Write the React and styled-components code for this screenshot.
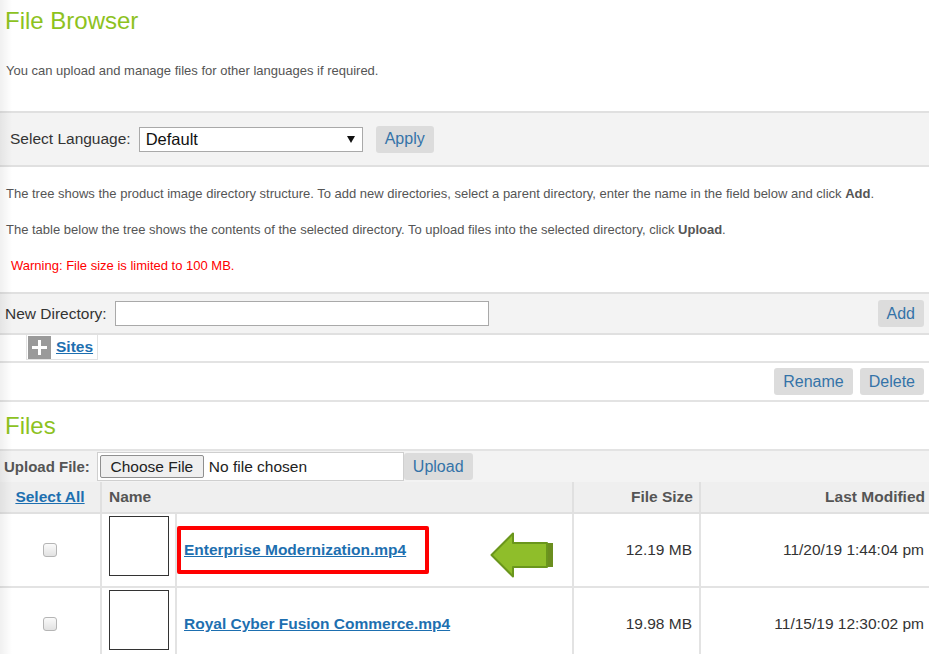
import React from 'react';
import styled, { createGlobalStyle } from 'styled-components';

const GlobalStyle = createGlobalStyle`
  html, body {
    margin: 0;
    padding: 0;
    background: #fff;
  }
  body {
    font-family: "Liberation Sans", Arial, sans-serif;
    color: #555;
  }
`;

const Page = styled.div`
  position: relative;
  width: 929px;
  &::after {
    content: '';
    position: absolute;
    top: 0;
    left: 0;
    bottom: 0;
    width: 12px;
    pointer-events: none;
    background: linear-gradient(to right, rgba(0, 0, 0, 0.06), rgba(0, 0, 0, 0));
  }
`;

const Title = styled.h1`
  margin: ${p => p.$top || 0}px 0 0 0;
  padding: ${p => (p.$first ? 7 : 0)}px 0 0 5px;
  font-size: 24px;
  line-height: 28px;
  font-weight: normal;
  color: #8dc21f;
`;

const Intro = styled.p`
  margin: 28px 0 32px 6px;
  font-size: 13px;
  line-height: 16px;
  color: #555;
`;

const Band = styled.div`
  display: flex;
  align-items: center;
  height: ${p => p.$h}px;
  padding: 0 5px 0 ${p => p.$left}px;
  background: #f3f3f3;
  border-top: 2px solid #e0e0e0;
  border-bottom: 2px solid #e0e0e0;
`;

const Label = styled.span`
  font-size: ${p => (p.$bold ? 15 : 15.5)}px;
  color: #333;
  margin-right: ${p => p.$gap}px;
  font-weight: ${p => (p.$bold ? 'bold' : 'normal')};
  ${p => p.$bold && 'color: #555;'}
`;

const FakeSelect = styled.div`
  display: flex;
  align-items: center;
  justify-content: space-between;
  box-sizing: border-box;
  width: 224px;
  height: 25px;
  padding: 0 6px 0 6px;
  background: #fff;
  border: 1px solid #a9a9a9;
  font-size: 16.5px;
  color: #111;
`;

const Caret = styled.span`
  width: 0;
  height: 0;
  border-left: 4px solid transparent;
  border-right: 4px solid transparent;
  border-top: 7px solid #111;
  margin-right: 1px;
`;

const Button = styled.button`
  height: 27px;
  padding: 0 9px;
  margin-left: ${p => p.$gap || 0}px;
  border: none;
  border-radius: 3px;
  background: #dcdcdc;
  color: #3473a8;
  font-family: "Liberation Sans", Arial, sans-serif;
  font-size: 16px;
  cursor: pointer;
`;

const TextInput = styled.input`
  box-sizing: border-box;
  width: 374px;
  height: 25px;
  border: 1px solid #a9a9a9;
  background: #fff;
  padding: 0 4px;
`;

const Spacer = styled.div`
  flex: 1;
`;

const Help = styled.p`
  margin: ${p => p.$top}px 0 0 6px;
  font-size: 13px;
  line-height: 16px;
  color: #555;
  b {
    font-weight: bold;
  }
`;

const Warning = styled(Help)`
  margin-left: 11px;
  margin-bottom: 18px;
  color: #f00;
`;

const TreeRow = styled.div`
  height: 26px;
  padding-left: 26px;
  border-bottom: 2px solid #e3e3e3;
`;

const TreeItem = styled.div`
  display: inline-flex;
  align-items: center;
  height: 25px;
  box-sizing: border-box;
  padding: 0 4px 0 1px;
  border: 1px solid #e3e3e3;
  border-top: none;
  gap: 5px;
`;

const Expander = styled.span`
  display: flex;
  align-items: center;
  justify-content: center;
  width: 23px;
  height: 23px;
  background: #9a9a9a;
`;

const Link = styled.a`
  font-weight: bold;
  font-size: ${p => p.$size || 15.5}px;
  color: #1d6fb0;
  text-decoration: underline;
  cursor: pointer;
`;

const ActionRow = styled.div`
  display: flex;
  align-items: center;
  justify-content: flex-end;
  height: 37px;
  padding-right: 5px;
  border-bottom: 2px solid #e3e3e3;
`;

const UploadBand = styled.div`
  display: flex;
  align-items: center;
  height: 31px;
  padding-left: 4px;
  margin-top: 9px;
  background: #f3f3f3;
  border-top: 2px solid #e3e3e3;
`;

const FileBox = styled.div`
  display: flex;
  align-items: center;
  box-sizing: border-box;
  width: 307px;
  height: 29px;
  padding-left: 2px;
  background: #fff;
  border: 1px solid #cfcfcf;
  font-size: 15.5px;
  color: #222;
`;

const ChooseButton = styled.span`
  display: flex;
  align-items: center;
  justify-content: center;
  box-sizing: border-box;
  width: 104px;
  height: 23px;
  margin-right: 5px;
  background: #efefef;
  border: 1px solid #8f8f8f;
  border-radius: 2px;
  color: #222;
`;

const Table = styled.table`
  width: 929px;
  table-layout: fixed;
  border-collapse: collapse;
  font-size: 15.5px;
`;

const Th = styled.th`
  height: 30px;
  padding: 0 ${p => p.$pr || 0}px 0 ${p => p.$pl || 0}px;
  background: #efefef;
  border: 2px solid #e0e0e0;
  border-top: none;
  text-align: ${p => p.$align || 'left'};
  color: #555;
  font-weight: bold;
  &:first-child {
    border-left: none;
  }
  &:last-child {
    border-right: none;
  }
`;

const Td = styled.td`
  height: 72px;
  padding: 0 ${p => p.$pr || 0}px 0 ${p => p.$pl || 0}px;
  border: 2px solid #e3e3e3;
  text-align: ${p => p.$align || 'left'};
  vertical-align: ${p => p.$valign || 'middle'};
  color: #333;
  &:first-child {
    border-left: none;
  }
  &:last-child {
    border-right: none;
  }
`;

const Check = styled.input.attrs({ type: 'checkbox' })`
  appearance: none;
  display: block;
  margin: 0 auto;
  width: 14px;
  height: 14px;
  border: 1px solid #b5b5b5;
  border-radius: 3px;
  background: linear-gradient(#fafafa, #e2e2e2);
`;

const Thumb = styled.div`
  width: 58px;
  height: 58px;
  margin-top: 2px;
  border: 1px solid #333;
  background: #fff;
`;

const NameCell = styled.div`
  display: flex;
  align-items: center;
`;

const Highlight = styled.span`
  display: inline-flex;
  align-items: center;
  box-sizing: border-box;
  width: 252px;
  height: 48px;
  margin-left: -7px;
  padding-left: 3px;
  border: 4px solid #f00;
  border-radius: 2px;
`;

const Arrow = () => (
  <svg width="64" height="47" viewBox="0 0 64 47" style={{ marginLeft: 61, marginTop: 10 }}>
    <rect x="55" y="11" width="8" height="24" fill="#6b8e1f" />
    <polygon
      points="1.5,23 23,1.5 23,11 57,11 57,35 23,35 23,44.5"
      fill="#8fbe2a"
      stroke="#6a961c"
      strokeWidth="2"
      strokeLinejoin="round"
    />
  </svg>
);

const Plus = () => (
  <svg width="15" height="15" viewBox="0 0 15 15">
    <rect x="6" y="0" width="3" height="15" fill="#fff" />
    <rect x="0" y="6" width="15" height="3" fill="#fff" />
  </svg>
);

const files = [
  { name: 'Enterprise Modernization.mp4', size: '12.19 MB', date: '11/20/19 1:44:04 pm', marked: true },
  { name: 'Royal Cyber Fusion Commerce.mp4', size: '19.98 MB', date: '11/15/19 12:30:02 pm' },
];

const App = () => (
  <Page>
    <GlobalStyle />
    <Title $first>File Browser</Title>
    <Intro>You can upload and manage files for other languages if required.</Intro>

    <Band $h={52} $left={10}>
      <Label $gap={8}>Select Language:</Label>
      <FakeSelect>
        Default
        <Caret />
      </FakeSelect>
      <Button $gap={13}>Apply</Button>
    </Band>

    <Help $top={19}>
      The tree shows the product image directory structure. To add new directories, select a parent directory, enter the name in the field below and click <b>Add</b>.
    </Help>
    <Help $top={20}>
      The table below the tree shows the contents of the selected directory. To upload files into the selected directory, click <b>Upload</b>.
    </Help>
    <Warning $top={20}>Warning: File size is limited to 100 MB.</Warning>

    <Band $h={39} $left={5}>
      <Label $gap={8}>New Directory:</Label>
      <TextInput />
      <Spacer />
      <Button>Add</Button>
    </Band>

    <TreeRow>
      <TreeItem>
        <Expander>
          <Plus />
        </Expander>
        <Link>Sites</Link>
      </TreeItem>
    </TreeRow>

    <ActionRow>
      <Button>Rename</Button>
      <Button $gap={7}>Delete</Button>
    </ActionRow>

    <Title $top={10}>Files</Title>

    <UploadBand>
      <Label $gap={7} $bold>Upload File:</Label>
      <FileBox>
        <ChooseButton>Choose File</ChooseButton>
        No file chosen
      </FileBox>
      <Button>Upload</Button>
    </UploadBand>

    <Table>
      <colgroup>
        <col style={{ width: 101 }} />
        <col style={{ width: 75 }} />
        <col style={{ width: 397 }} />
        <col style={{ width: 127 }} />
        <col style={{ width: 229 }} />
      </colgroup>
      <thead>
        <tr>
          <Th $align="center">
            <Link>Select All</Link>
          </Th>
          <Th colSpan={2} $pl={7}>Name</Th>
          <Th $align="right" $pr={6}>File Size</Th>
          <Th $align="right" $pr={4}>Last Modified</Th>
        </tr>
      </thead>
      <tbody>
        {files.map(f => (
          <tr key={f.name}>
            <Td>
              <Check />
            </Td>
            <Td $pl={7} $valign="top">
              <Thumb />
            </Td>
            <Td $pl={7}>
              <NameCell>
                {f.marked ? (
                  <>
                    <Highlight>
                      <Link>{f.name}</Link>
                    </Highlight>
                    <Arrow />
                  </>
                ) : (
                  <Link>{f.name}</Link>
                )}
              </NameCell>
            </Td>
            <Td $align="right" $pr={7}>{f.size}</Td>
            <Td $align="right" $pr={5}>{f.date}</Td>
          </tr>
        ))}
      </tbody>
    </Table>
  </Page>
);

export default App;
